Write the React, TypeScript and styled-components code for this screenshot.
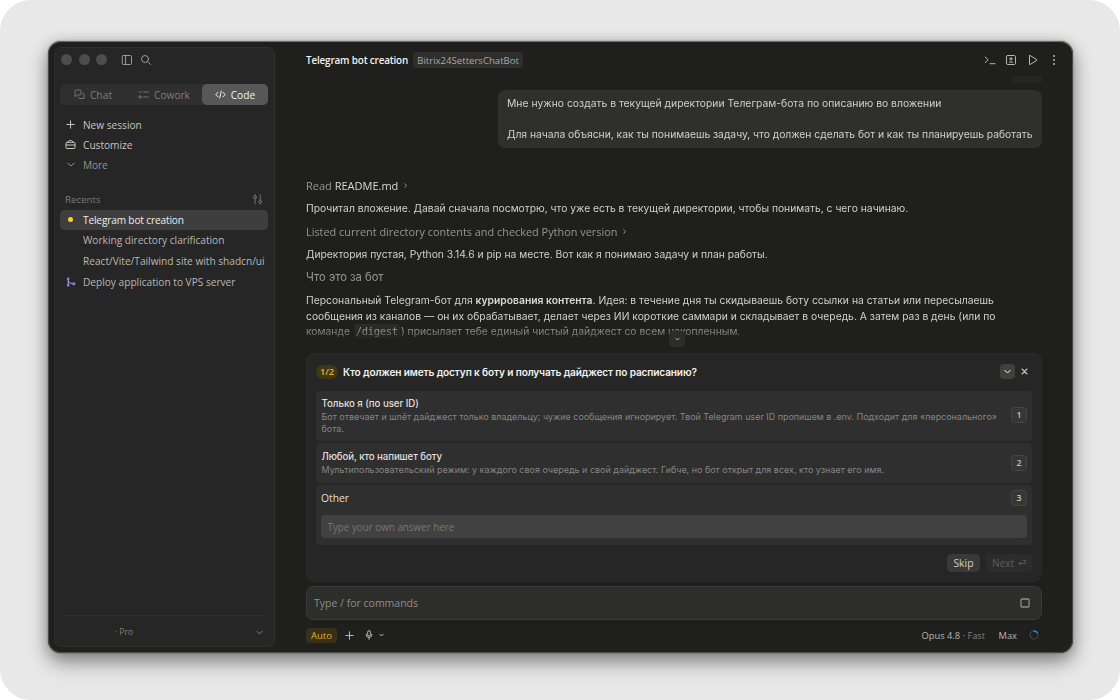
import React from 'react';
import styled, { createGlobalStyle } from 'styled-components';

const GlobalStyle = createGlobalStyle`
  * { box-sizing: border-box; }
  body { margin: 0; background: #fff; }
  button, input { font: inherit; color: inherit; border: 0; margin: 0; padding: 0; background: none; }
`;

const Stage = styled.div`
  width: 1120px;
  height: 700px;
  padding: 41px 47px 47px 48px;
  border-radius: 31px;
  background: #e8e8e8;
  font-family: Inter, "Liberation Sans", sans-serif;
  overflow: hidden;
`;

const Window = styled.div`
  display: flex;
  height: 612px;
  padding: 6px 31px 6px 6px;
  border-radius: 13px;
  background: #1f1f1e;
  box-shadow: inset 0 1px 0 #6f6f6e, inset 0 0 0 1px #4a4a49, 0 0 2px rgba(0, 0, 0, 0.4),
    0 9px 20px rgba(0, 0, 0, 0.42), 0 2px 14px rgba(0, 0, 0, 0.14);
`;

const Text = styled.span<{ $size: number; $ls?: number; $weight?: number; $color?: string }>`
  font-size: ${(p) => p.$size}px;
  letter-spacing: ${(p) => p.$ls ?? 0}px;
  font-weight: ${(p) => p.$weight ?? 400};
  color: ${(p) => p.$color ?? 'inherit'};
  white-space: nowrap;
`;

const Label = styled(Text)`
  font-family: "Open Sans", "Noto Sans", sans-serif;
`;

const Sidebar = styled.aside`
  display: flex;
  flex-direction: column;
  width: 221px;
  padding: 0 6px 0 5px;
  border: 1px solid #2f2f2e;
  border-radius: 7px;
  background: #262626;
  color: #c6c5c0;
`;

const TitleBar = styled.div`
  display: flex;
  align-items: center;
  height: 23px;
  padding-left: 1px;
  color: #9b9a96;
`;

const Light = styled.span`
  width: 11px;
  height: 11px;
  margin-right: 6.5px;
  border-radius: 50%;
  background: #4d4d4d;
`;

const TitleIcons = styled.div`
  display: flex;
  gap: 7px;
  margin-left: 7.5px;
`;

const Tabs = styled.nav`
  display: flex;
  height: 21px;
  margin-top: 13px;
  border-radius: 5px;
  background: #2f2f2f;
  color: #7d7c79;
`;

const Tab = styled.button<{ $width: number; $active?: boolean }>`
  display: flex;
  align-items: center;
  justify-content: center;
  gap: 5px;
  width: ${(p) => p.$width}px;
  border-radius: 5px;
  background: ${(p) => (p.$active ? '#575757' : 'transparent')};
  color: ${(p) => (p.$active ? '#f2f1ed' : 'inherit')};
`;

const Menu = styled.div`
  margin-top: 9.5px;
`;

const MenuItem = styled.div<{ $muted?: boolean }>`
  display: grid;
  grid-template-columns: 23px 1fr;
  align-items: center;
  height: 20px;
  color: ${(p) => (p.$muted ? '#94938f' : '#c6c5c0')};
`;

const IconCell = styled.span`
  display: flex;
  justify-content: center;
  padding-right: 1.5px;
`;

const SectionHead = styled.div`
  display: flex;
  justify-content: space-between;
  align-items: center;
  height: 20px;
  margin-top: 15px;
  padding: 0 5px 0 5px;
  color: #7b7a77;
`;

const Session = styled.div<{ $active?: boolean }>`
  display: grid;
  grid-template-columns: 23px 1fr;
  align-items: center;
  height: 20px;
  margin-bottom: 0.75px;
  border-radius: 4.5px;
  background: ${(p) => (p.$active ? '#3e3e3e' : 'transparent')};
  color: ${(p) => (p.$active ? '#eeede9' : '#b9b8b3')};
`;

const Dot = styled.span`
  width: 5px;
  height: 5px;
  border-radius: 50%;
  background: #fccd35;
`;

const Account = styled.div`
  display: flex;
  align-items: center;
  justify-content: space-between;
  height: 31px;
  margin: auto 3px 0;
  padding: 2px 2px 0 52px;
  border-top: 1px solid #30302f;
  color: #7f7e7b;
`;

const Main = styled.main`
  display: flex;
  flex-direction: column;
  flex: 1;
  min-width: 0;
  margin-left: 31px;
`;

const Header = styled.header`
  display: flex;
  align-items: center;
  height: 26px;
  color: #f3f2ee;
`;

const Badge = styled.span`
  display: flex;
  align-items: center;
  justify-content: center;
  width: 110px;
  height: 15.5px;
  margin-left: 5px;
  border-radius: 4px;
  background: #2e2e2d;
  color: #a9a8a3;
`;

const HeaderIcons = styled.div`
  display: flex;
  align-items: center;
  gap: 9.5px;
  margin: 0 -18px 0 auto;
  color: #b8b7b2;
`;

const Transcript = styled.section`
  display: flex;
  flex-direction: column;
  height: 277px;
  color: #d0cfca;
  overflow: hidden;
  mask-image: linear-gradient(#000 248px, rgba(0, 0, 0, 0.5) 260px, transparent 275px);
`;

const Attachment = styled.div`
  align-self: flex-end;
  width: 30px;
  height: 7px;
  margin-top: 3px;
  background: #252524;
`;

const Bubble = styled.div`
  display: flex;
  flex-direction: column;
  align-self: flex-end;
  flex: none;
  justify-content: space-between;
  width: 544px;
  height: 58px;
  margin: 7px 0 29.5px;
  padding: 6px 9px;
  border-radius: 7px;
  background: #2f2f2e;
  line-height: 15.5px;
`;

const Line = styled.div<{ $muted?: boolean; $gap?: number }>`
  display: flex;
  align-items: center;
  flex: none;
  height: 15.3px;
  margin-bottom: ${(p) => p.$gap ?? 7.75}px;
  color: ${(p) => (p.$muted ? '#979691' : '#d0cfca')};
  white-space: pre;

  b { font-weight: 600; color: #dad9d4; }
  svg { margin-left: 5px; }
`;

const InlineCode = styled.code`
  padding: 1px 2px;
  margin: 0 1px;
  border-radius: 3px;
  background: #2f2f2e;
  font: 10.5px "DejaVu Sans Mono", monospace;
  letter-spacing: -0.32px;
`;

const JumpButton = styled.button`
  display: flex;
  align-items: center;
  justify-content: center;
  position: relative;
  z-index: 1;
  align-self: center;
  flex: none;
  width: 16px;
  height: 16px;
  margin: -19px 0 0 6px;
  border-radius: 4px;
  background: #2c2c2b;
  color: #a9a8a3;
`;

const Card = styled.section`
  height: 229px;
  margin-top: 6px;
  padding: 0 9px;
  border: 1px solid #2a2a29;
  border-radius: 8px;
  background: #262626;
`;

const CardHead = styled.div`
  display: flex;
  align-items: center;
  height: 36.500px;
  padding-bottom: 1px;
  color: #f3f2ee;
`;

const Step = styled.span`
  display: flex;
  align-items: center;
  justify-content: center;
  width: 22px;
  height: 14px;
  margin-right: 5px;
  border-radius: 7px;
  background: #403716;
  color: #e0b52a;
`;

const Collapse = styled.button`
  display: flex;
  align-items: center;
  justify-content: center;
  width: 15px;
  height: 15px;
  margin: 0 6px 0 auto;
  border-radius: 4px;
  background: #40403f;
`;

const Close = styled.button`
  display: flex;
  margin-right: 4px;
  color: #c5c4bf;
`;

const Options = styled.div`
  display: flex;
  flex-direction: column;
  gap: 2px;
`;

const Option = styled.div<{ $height: number }>`
  display: flex;
  align-items: center;
  justify-content: space-between;
  height: ${(p) => p.$height}px;
  padding: 0 5px 1px 5.500px;
  border-radius: 4px;
  background: #2f2f2f;
  color: #e0dfda;
`;

const OptionBody = styled.div`
  display: flex;
  flex-direction: column;
  line-height: 11.8px;
`;

const OptionTitle = styled.div`
  height: 14.5px;
`;

const Key = styled.kbd`
  display: flex;
  align-items: center;
  justify-content: center;
  width: 16px;
  height: 16px;
  border: 1px solid #454544;
  border-radius: 3.5px;
  background: #363635;
  color: #c4c3be;
  font: 600 8.8px "Open Sans", sans-serif;
`;

const OtherOption = styled.div`
  height: 60px;
  padding: 5px 5px 0;
  border-radius: 4px;
  background: #2f2f2f;
  color: #e0dfda;
`;

const OtherHead = styled.div`
  display: flex;
  align-items: center;
  justify-content: space-between;
  height: 16px;
  margin-bottom: 9px;
`;

const AnswerField = styled.div`
  display: flex;
  align-items: center;
  height: 23px;
  padding-left: 6.500px;
  border-radius: 4px;
  background: #414141;
  color: #777775;
`;

const Actions = styled.div`
  display: flex;
  justify-content: flex-end;
  gap: 6px;
  margin-top: 9px;
`;

const Action = styled.button<{ $width: number; $disabled?: boolean }>`
  display: flex;
  align-items: center;
  justify-content: center;
  gap: 4px;
  width: ${(p) => p.$width}px;
  height: 18px;
  border-radius: 4.5px;
  background: ${(p) => (p.$disabled ? '#2c2c2c' : '#393939')};
  color: ${(p) => (p.$disabled ? '#5f5f5d' : '#d0cfca')};
`;

const Composer = styled.div`
  display: flex;
  align-items: center;
  justify-content: space-between;
  height: 34px;
  margin-top: 4px;
  padding: 0 11px 0 7px;
  border: 1px solid #393937;
  border-radius: 7px;
  background: #2d2d2c;
  color: #8f8e89;
`;

const StatusBar = styled.footer`
  display: flex;
  align-items: center;
  height: 15.5px;
  margin-top: 7.5px;
  color: #b8b7b2;
`;

const ModeChip = styled.span`
  display: flex;
  align-items: center;
  justify-content: center;
  width: 31px;
  height: 15.5px;
  margin-right: 7.500px;
  border-radius: 4px;
  background: #38301a;
  color: #dcb02b;
`;

const Tools = styled.div<{ $gap?: number; $left?: number; $right?: number }>`
  display: flex;
  align-items: center;
  gap: ${(p) => p.$gap ?? 0}px;
  margin: 0 ${(p) => p.$right ?? 0}px 0 ${(p) => p.$left ?? 0}px;
`;

const Model = styled.div`
  display: flex;
  align-items: center;
  margin: 0 3px 0 auto;
`;

const Svg = ({ w = 12, h = w, sw = 1, children }: { w?: number; h?: number; sw?: number; children: React.ReactNode }) => (
  <svg width={w} height={h} viewBox={`0 0 ${w} ${h}`} fill="none" stroke="currentColor" strokeWidth={sw} strokeLinecap="round" strokeLinejoin="round">
    {children}
  </svg>
);

const PanelIcon = () => <Svg><rect x="1.3" y="1.5" width="9.2" height="9" rx="1" /><path d="M4.6 1.5v9" /></Svg>;
const SearchIcon = () => <Svg><circle cx="5" cy="5" r="3.5" /><path d="M7.600 7.600l2.900 2.900" /></Svg>;
const ChatIcon = () => (
  <Svg w={11} sw={0.9}><path d="M1 7.3V2.2Q1 1 2.2 1h3.6Q7 1 7 2.2v2.6Q7 6 5.8 6H3z" /><path d="M8.7 4.1Q10 4.2 10 5.4v4.1H5.4Q4.4 9.4 4.2 8" /></Svg>
);
const TasksIcon = () => (
  <Svg w={11} sw={0.9}><path d="M.8 2.8l1 1 1.7-2M5.5 3h4.8M5.500 8h4.8" /><circle cx="2" cy="8" r="1.2" /></Svg>
);
const CodeIcon = () => <Svg w={11} sw={1}><path d="M3 3.2L.8 5.5 3 7.8M8 3.2l2.2 2.3L8 7.8M6.3 2L4.7 9" /></Svg>;
const PlusIcon = () => <Svg w={9} sw={1}><path d="M4.5 .8v7.4M.8 4.5h7.4" /></Svg>;
const BriefcaseIcon = () => (
  <Svg w={11} sw={1}><rect x="1" y="3.3" width="9" height="6.2" rx="1" /><path d="M3.3 3.2Q3.4 1.5 4.5 1.5h2Q7.6 1.5 7.7 3.2M1 6h9" /></Svg>
);
const Chevron = ({ w = 8 }: { w?: number }) => <Svg w={w} h={5}><path d={`M.8 1.200L${w / 2} ${w < 6 ? 3 : 4} ${w - 0.8} 1.200`} /></Svg>;
const RightChevron = () => <Svg w={5} h={7}><path d="M1.8 1.7l1.700 1.800-1.700 1.800" /></Svg>;
const FilterIcon = () => (
  <Svg w={11} sw={0.9}><circle cx="3" cy="3.3" r="1.4" /><path d="M3 .8v1M3 4.8v5.200M8.200 1v5" /><circle cx="8.2" cy="7.6" r="1.4" /><path d="M8.2 9v1" /></Svg>
);
const BranchIcon = () => (
  <Svg w={10} sw={1.100}><path d="M2.2 2.5v5M2.2 2.7Q2.5 6.3 6.5 6.500" /><circle cx="2.2" cy="1.7" r=".7" /><circle cx="2.2" cy="8.200" r=".7" /><circle cx="7.8" cy="6.7" r="1" /></Svg>
);
const TerminalIcon = () => <Svg><path d="M1.2 3l3 2.700-3 2.800M6 9.700h5" /></Svg>;
const DiffIcon = () => (
  <Svg><rect x="1.5" y="1.5" width="9" height="9" rx="1.2" /><path d="M6 3.3v3.2M4.4 4.9h3.2M4.4 8.1h3.2" /></Svg>
);
const PlayIcon = () => <Svg><path d="M2.5 1.8v8.4Q2.5 10.8 3.1 10.5L9.8 6.4Q10.2 6 9.8 5.7L3.1 1.5Q2.5 1.2 2.5 1.8z" /></Svg>;
const MoreIcon = () => (
  <Svg sw={0}><g fill="currentColor"><circle cx="6" cy="2" r="1" /><circle cx="6" cy="6" r="1" /><circle cx="6" cy="10" r="1" /></g></Svg>
);
const CloseIcon = () => <Svg w={7} sw={1.1}><path d="M1 1l5 5M6 1L1 6" /></Svg>;
const ReturnIcon = () => <Svg w={8} sw={0.9}><path d="M7.2 1.5v3H1M2.8 2.8L1 4.5l1.8 1.7M7.2 1.500H5.500" /></Svg>;
const StopIcon = () => <Svg w={10} sw={1.3}><rect x="1" y="1" width="8" height="8" rx="1" /></Svg>;
const MicIcon = () => <Svg w={8} h={10} sw={1}><rect x="2.6" y=".7" width="2.8" height="5.3" rx="1.4" /><path d="M1 4.3Q1.1 7.5 4 7.5T7 4.3M4 7.5v1.8" /></Svg>;
const UsageRing = () => (
  <Svg w={10} sw={1.2}><circle cx="5" cy="5" r="4" stroke="#454544" /><path d="M5 1Q7 1 8.3 2.7" stroke="#2d8fd8" strokeWidth={1.5} /></Svg>
);

const sessions = [
  { title: 'Telegram bot creation', ls: -0.157, icon: <Dot />, active: true },
  { title: 'Working directory clarification', ls: 0 },
  { title: 'React/Vite/Tailwind site with shadcn/ui', ls: 0 },
  { title: 'Deploy application to VPS server', ls: 0, icon: <BranchIcon />, color: '#a58be0' },
];

const IconTint = styled(IconCell)<{ $color?: string }>`
  color: ${(p) => p.$color ?? 'inherit'};
`;

export default function App() {
  return (
    <Stage>
      <GlobalStyle />
      <Window>
        <Sidebar>
          <TitleBar>
            <Light /><Light /><Light />
            <TitleIcons><PanelIcon /><SearchIcon /></TitleIcons>
          </TitleBar>
          <Tabs>
            <Tab $width={66}><ChatIcon /><Label $size={10.15} $ls={0.1}>Chat</Label></Tab>
            <Tab $width={76}><TasksIcon /><Label $size={10.15}>Cowork</Label></Tab>
            <Tab $width={66} $active><CodeIcon /><Label $size={10.15} $ls={0.08} $weight={500}>Code</Label></Tab>
          </Tabs>
          <Menu>
            <MenuItem><IconCell><PlusIcon /></IconCell><Label $size={10.15}>New session</Label></MenuItem>
            <MenuItem><IconCell><BriefcaseIcon /></IconCell><Label $size={10.15}>Customize</Label></MenuItem>
            <MenuItem $muted><IconCell><Chevron /></IconCell><Label $size={10.15} $ls={-0.1}>More</Label></MenuItem>
          </Menu>
          <SectionHead><Label $size={9.7}>Recents</Label><FilterIcon /></SectionHead>
          {sessions.map((s) => (
            <Session key={s.title} $active={s.active}>
              <IconTint $color={s.color}>{s.icon}</IconTint>
              <Label $size={10.15} $ls={s.ls}>{s.title}</Label>
            </Session>
          ))}
          <Account><Label $size={8.6} $ls={-0.07}>· Pro</Label><Chevron w={7} /></Account>
        </Sidebar>
        <Main>
          <Header>
            <Label $size={9.9} $ls={-0.155} $weight={600}>Telegram bot creation</Label>
            <Badge><Label $size={9.6}>Bitrix24SettersChatBot</Label></Badge>
            <HeaderIcons><TerminalIcon /><DiffIcon /><PlayIcon /><MoreIcon /></HeaderIcons>
          </Header>
          <Transcript>
            <Attachment />
            <Bubble>
              <Text $size={10.35}>Мне нужно создать в текущей директории Телеграм-бота по описанию во вложении</Text>
              <Text $size={10.35} $ls={-0.03}>Для начала объясни, как ты понимаешь задачу, что должен сделать бот и как ты планируешь работать</Text>
            </Bubble>
            <Line $muted>
              <Label $size={11}>Read <Label $size={11} $color="#d8d7d2">README.md</Label></Label><RightChevron />
            </Line>
            <Line><Text $size={10.3} $ls={0.005}>Прочитал вложение. Давай сначала посмотрю, что уже есть в текущей директории, чтобы понимать, с чего начинаю.</Text></Line>
            <Line $muted><Label $size={10.9}>Listed current directory contents and checked Python version</Label><RightChevron /></Line>
            <Line><Text $size={10.3}>Директория пустая, Python 3.14.6 и pip на месте. Вот как я понимаю задачу и план работы.</Text></Line>
            <Line $muted><Text $size={11.2}>Что это за бот</Text></Line>
            <Line $gap={0}>
              <Text $size={10.3} $ls={0.012}>Персональный Telegram-бот для <b>курирования контента</b>. Идея: в течение дня ты скидываешь боту ссылки на статьи или пересылаешь</Text>
            </Line>
            <Line $gap={0}>
              <Text $size={10.3} $ls={0.01}>сообщения из каналов — он их обрабатывает, делает через ИИ короткие саммари и складывает в очередь. А затем раз в день (или по</Text>
            </Line>
            <Line $gap={0}>
              <Text $size={10.3} $ls={0.02}>команде <InlineCode>/digest</InlineCode>) присылает тебе единый чистый дайджест со всем накопленным.</Text>
            </Line>
          </Transcript>
          <JumpButton aria-label="Scroll down"><Chevron w={5} /></JumpButton>
          <Card>
            <CardHead>
              <Step><Label $size={9.2} $weight={600}>1/2</Label></Step>
              <Text $size={10.1} $ls={-0.14} $weight={600}>Кто должен иметь доступ к боту и получать дайджест по расписанию?</Text>
              <Collapse aria-label="Collapse"><Chevron w={7} /></Collapse>
              <Close aria-label="Close"><CloseIcon /></Close>
            </CardHead>
            <Options>
              <Option $height={50.5}>
                <OptionBody>
                  <OptionTitle><Text $size={9.7} $ls={-0.05} $weight={500}>Только я (по user ID)</Text></OptionTitle>
                  <Text $size={8.93} $ls={0.01} $color="#868683">Бот отвечает и шлёт дайджест только владельцу; чужие сообщения игнорирует. Твой Telegram user ID пропишем в .env. Подходит для «персонального»</Text>
                  <Text $size={8.93} $color="#868683">бота.</Text>
                </OptionBody>
                <Key>1</Key>
              </Option>
              <Option $height={40}>
                <OptionBody>
                  <OptionTitle><Text $size={9.7} $ls={-0.1} $weight={500}>Любой, кто напишет боту</Text></OptionTitle>
                  <Text $size={8.95} $ls={0.01} $color="#868683">Мультипользовательский режим: у каждого своя очередь и свой дайджест. Гибче, но бот открыт для всех, кто узнает его имя.</Text>
                </OptionBody>
                <Key>2</Key>
              </Option>
              <OtherOption>
                <OtherHead><Label $size={10.3} $weight={500}>Other</Label><Key>3</Key></OtherHead>
                <AnswerField><Label $size={9.9} $ls={-0.03}>Type your own answer here</Label></AnswerField>
              </OtherOption>
            </Options>
            <Actions>
              <Action $width={33}><Label $size={10.4} $weight={500}>Skip</Label></Action>
              <Action $width={46} $disabled><Label $size={10.1}>Next</Label><ReturnIcon /></Action>
            </Actions>
          </Card>
          <Composer><Label $size={10.5}>Type / for commands</Label><StopIcon /></Composer>
          <StatusBar>
            <ModeChip><Label $size={9.5} $weight={500}>Auto</Label></ModeChip>
            <Tools $gap={11}><PlusIcon /><MicIcon /></Tools>
            <Tools $left={6.5}><Chevron w={5} /></Tools>
            <Model>
              <Label $size={9.3}>Opus 4.8 · <Label $size={9.3} $color="#82817d">Fast</Label></Label>
              <Tools $left={13.5} $right={12}><Label $size={9.3} $weight={500}>Max</Label></Tools>
              <UsageRing />
            </Model>
          </StatusBar>
        </Main>
      </Window>
    </Stage>
  );
}
